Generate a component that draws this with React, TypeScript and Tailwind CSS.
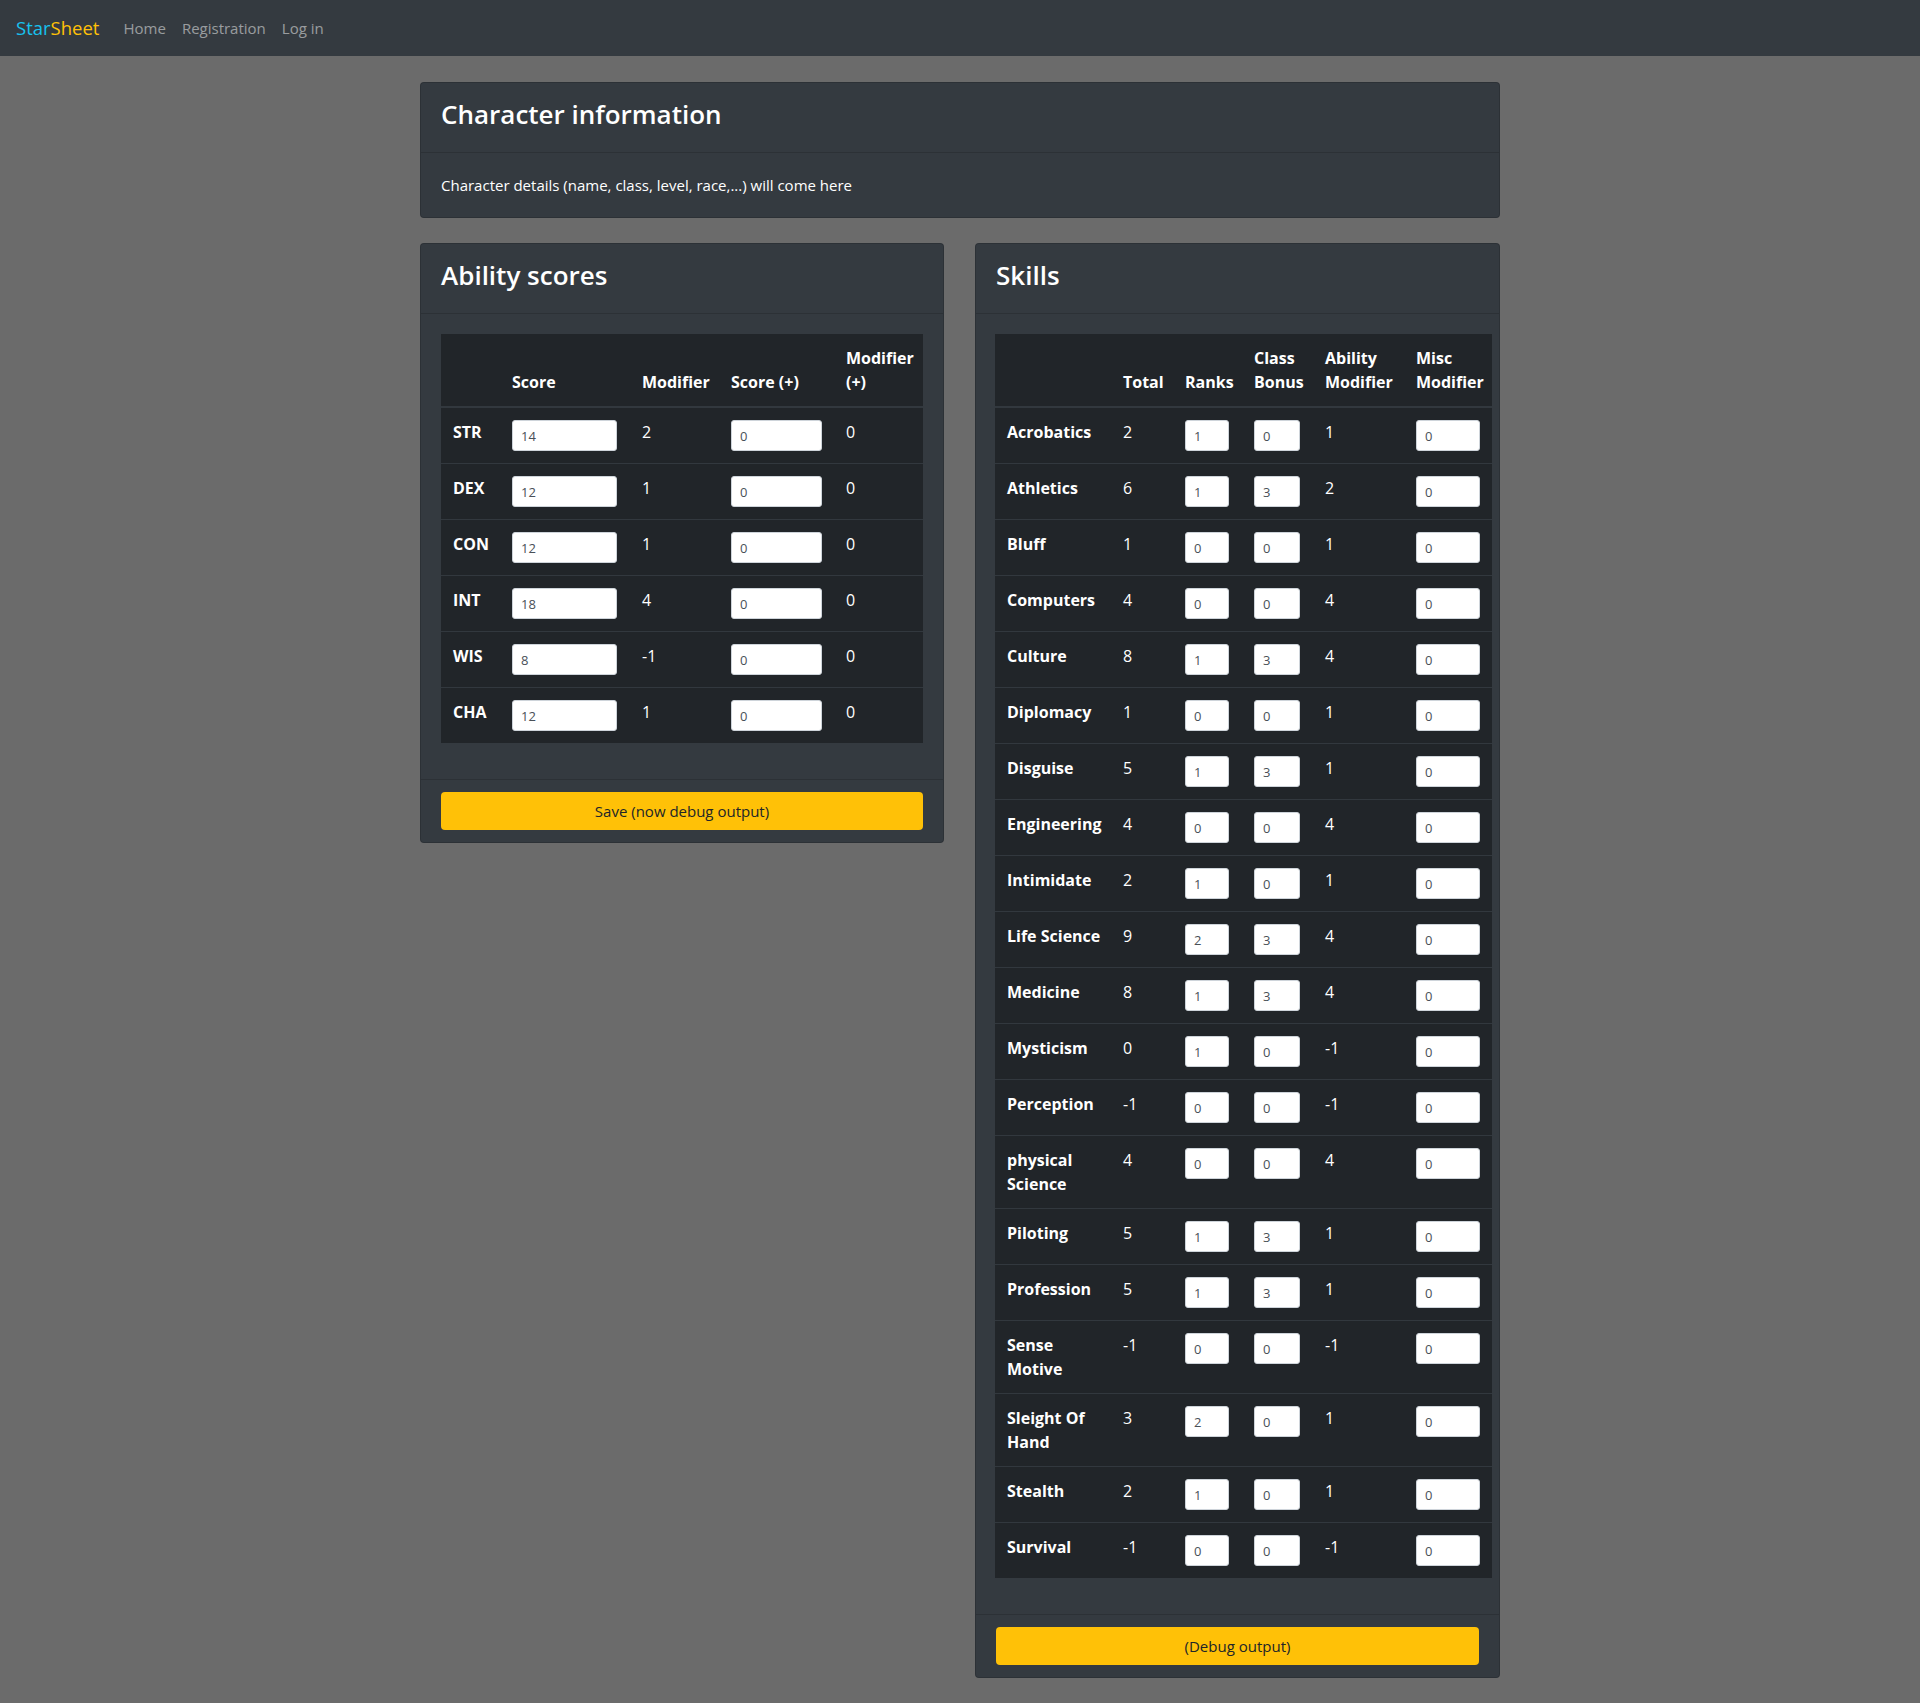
import React from 'react';

type Ability = { name: string; score: number; mod: number };
type Skill = { name: React.ReactNode; total: number; ranks: number; cls: number; ability: number; misc: number };

const abilities: Ability[] = [
  { name: 'STR', score: 14, mod: 2 },
  { name: 'DEX', score: 12, mod: 1 },
  { name: 'CON', score: 12, mod: 1 },
  { name: 'INT', score: 18, mod: 4 },
  { name: 'WIS', score: 8, mod: -1 },
  { name: 'CHA', score: 12, mod: 1 },
];

const skills: Skill[] = [
  { name: 'Acrobatics', total: 2, ranks: 1, cls: 0, ability: 1, misc: 0 },
  { name: 'Athletics', total: 6, ranks: 1, cls: 3, ability: 2, misc: 0 },
  { name: 'Bluff', total: 1, ranks: 0, cls: 0, ability: 1, misc: 0 },
  { name: 'Computers', total: 4, ranks: 0, cls: 0, ability: 4, misc: 0 },
  { name: 'Culture', total: 8, ranks: 1, cls: 3, ability: 4, misc: 0 },
  { name: 'Diplomacy', total: 1, ranks: 0, cls: 0, ability: 1, misc: 0 },
  { name: 'Disguise', total: 5, ranks: 1, cls: 3, ability: 1, misc: 0 },
  { name: 'Engineering', total: 4, ranks: 0, cls: 0, ability: 4, misc: 0 },
  { name: 'Intimidate', total: 2, ranks: 1, cls: 0, ability: 1, misc: 0 },
  { name: 'Life Science', total: 9, ranks: 2, cls: 3, ability: 4, misc: 0 },
  { name: 'Medicine', total: 8, ranks: 1, cls: 3, ability: 4, misc: 0 },
  { name: 'Mysticism', total: 0, ranks: 1, cls: 0, ability: -1, misc: 0 },
  { name: 'Perception', total: -1, ranks: 0, cls: 0, ability: -1, misc: 0 },
  { name: <>physical<br />Science</>, total: 4, ranks: 0, cls: 0, ability: 4, misc: 0 },
  { name: 'Piloting', total: 5, ranks: 1, cls: 3, ability: 1, misc: 0 },
  { name: 'Profession', total: 5, ranks: 1, cls: 3, ability: 1, misc: 0 },
  { name: <>Sense<br />Motive</>, total: -1, ranks: 0, cls: 0, ability: -1, misc: 0 },
  { name: <>Sleight Of<br />Hand</>, total: 3, ranks: 2, cls: 0, ability: 1, misc: 0 },
  { name: 'Stealth', total: 2, ranks: 1, cls: 0, ability: 1, misc: 0 },
  { name: 'Survival', total: -1, ranks: 0, cls: 0, ability: -1, misc: 0 },
];

const th = 'p-3 text-left align-bottom font-bold border-b-2 border-[#32383e]';
const td = 'p-3 align-top border-t border-[#32383e]';

function Field({ value, width }: { value: number; width: string }) {
  return (
    <input
      readOnly
      value={value}
      className={`${width} h-[31px] px-2 text-[13px] rounded-[3px] border border-[#ced4da] bg-white text-[#495057] outline-none`}
    />
  );
}

function Card({ title, children, footer }: { title: string; children: React.ReactNode; footer?: React.ReactNode }) {
  return (
    <div className="bg-[#343a40] border border-black/15 rounded-[4px] text-white">
      <div className="h-[70px] px-5 flex items-center border-b border-black/15">
        <h3 className="text-[26px] font-semibold leading-none -mt-2">{title}</h3>
      </div>
      <div className="p-5">{children}</div>
      {footer && <div className="px-5 py-3 border-t border-black/15">{footer}</div>}
    </div>
  );
}

function YellowButton({ label }: { label: string }) {
  return (
    <button className="w-full h-[38px] rounded-[4px] bg-[#ffc107] text-[#212529] text-[15px]">{label}</button>
  );
}

export default function App() {
  return (
    <div className="min-h-screen bg-[#6b6b6b] font-['Open_Sans',sans-serif] text-base leading-6">
      <nav className="h-14 bg-[#343a40] flex items-center px-4 text-[15px]">
        <a className="text-[18.5px] mr-4">
          <span className="text-[#17c1ee]">Star</span>
          <span className="text-[#ffc107]">Sheet</span>
        </a>
        <div className="flex text-white/50">
          <a className="px-2">Home</a>
          <a className="px-2">Registration</a>
          <a className="px-2">Log in</a>
        </div>
      </nav>

      <main className="w-[1080px] mx-auto pt-[26px] pb-[25px]">
        <Card title="Character information">
          <p className="text-[15px]">Character details (name, class, level, race,...) will come here</p>
        </Card>

        <div className="mt-[25px] grid grid-cols-[524px_525px] gap-[31px] items-start">
          <Card title="Ability scores" footer={<YellowButton label="Save (now debug output)" />}>
            <table className="w-full mb-4 bg-[#212529] text-white table-fixed">
              <colgroup>
                <col className="w-[59px]" />
                <col className="w-[130px]" />
                <col className="w-[89px]" />
                <col className="w-[115px]" />
                <col />
              </colgroup>
              <thead>
                <tr>
                  <th className={th}></th>
                  <th className={th}>Score</th>
                  <th className={th}>Modifier</th>
                  <th className={th}>Score (+)</th>
                  <th className={th}>Modifier<br />(+)</th>
                </tr>
              </thead>
              <tbody>
                {abilities.map((a) => (
                  <tr key={a.name}>
                    <th className={`${td} text-left font-bold`}>{a.name}</th>
                    <td className={td}><Field value={a.score} width="w-[105px]" /></td>
                    <td className={td}>{a.mod}</td>
                    <td className={td}><Field value={0} width="w-[91px]" /></td>
                    <td className={td}>0</td>
                  </tr>
                ))}
              </tbody>
            </table>
          </Card>

          <Card title="Skills" footer={<YellowButton label="(Debug output)" />}>
            <table className="w-[497px] -ml-px mb-4 bg-[#212529] text-white table-fixed">
              <colgroup>
                <col className="w-[116px]" />
                <col className="w-[62px]" />
                <col className="w-[69px]" />
                <col className="w-[71px]" />
                <col className="w-[91px]" />
                <col />
              </colgroup>
              <thead>
                <tr>
                  <th className={th}></th>
                  <th className={th}>Total</th>
                  <th className={th}>Ranks</th>
                  <th className={th}>Class<br />Bonus</th>
                  <th className={th}>Ability<br />Modifier</th>
                  <th className={th}>Misc<br />Modifier</th>
                </tr>
              </thead>
              <tbody>
                {skills.map((s, i) => (
                  <tr key={i}>
                    <th className={`${td} text-left font-bold whitespace-nowrap`}>{s.name}</th>
                    <td className={td}>{s.total}</td>
                    <td className={td}><Field value={s.ranks} width="w-[44px]" /></td>
                    <td className={td}><Field value={s.cls} width="w-[46px]" /></td>
                    <td className={td}>{s.ability}</td>
                    <td className={td}><Field value={s.misc} width="w-[64px]" /></td>
                  </tr>
                ))}
              </tbody>
            </table>
          </Card>
        </div>
      </main>
    </div>
  );
}
